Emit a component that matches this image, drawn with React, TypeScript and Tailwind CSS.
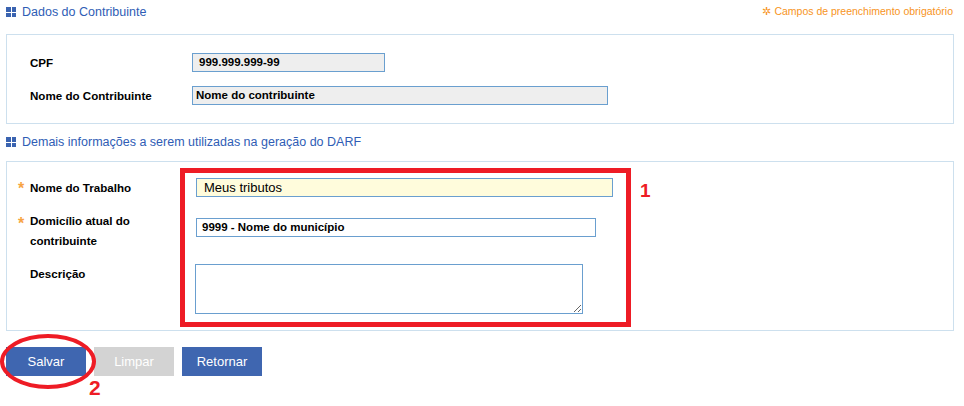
import React from "react";

const GridIcon = () => (
  <span className="grid grid-cols-2 gap-[1px] w-[10px] h-[10px] shrink-0">
    <span className="bg-[#3a63b0]" />
    <span className="bg-[#3a63b0]" />
    <span className="bg-[#3a63b0]" />
    <span className="bg-[#3a63b0]" />
  </span>
);

const Req = () => (
  <span className="block w-[12px] shrink-0 text-[16px] leading-none font-bold text-[#f7a443]">*</span>
);

export default function App() {
  return (
    <div
      className="relative w-[964px] h-[406px] bg-white overflow-hidden"
      style={{ fontFamily: '"Liberation Sans", Arial, sans-serif' }}
    >
      {/* Header 1 */}
      <div className="flex items-center justify-between pl-[6px] pr-[11px] pt-[4px] h-[20px]">
        <div className="flex items-center gap-[6px]">
          <GridIcon />
          <span className="text-[12.5px] text-[#2f5db5]">Dados do Contribuinte</span>
        </div>
        <span className="text-[10.5px] text-[#f7941d]">
          <span className="mr-[3px]">✲</span>Campos de preenchimento obrigatório
        </span>
      </div>

      {/* Panel 1 */}
      <div className="mx-[6px] mt-[14px] w-[948px] border border-[#cde0ee] pt-[18px] pb-[18px] pl-[23px] flex flex-col gap-[14px]">
        <div className="flex items-center">
          <span className="w-[162px] text-[11.6px] font-bold text-black">CPF</span>
          <div className="w-[193px] h-[19px] border border-[#6a9fcf] bg-[#eeeeee] flex items-center pl-[6px] text-[11.5px] font-bold text-black">
            999.999.999-99
          </div>
        </div>
        <div className="flex items-center">
          <span className="w-[162px] text-[11.6px] font-bold text-black">Nome do Contribuinte</span>
          <div className="w-[416px] h-[19px] border border-[#6a9fcf] bg-[#eeeeee] flex items-center pl-[3px] text-[11.5px] font-bold text-black">
            Nome do contribuinte
          </div>
        </div>
      </div>

      {/* Header 2 */}
      <div className="flex items-center gap-[6px] pl-[6px] mt-[10px] h-[16px]">
        <GridIcon />
        <span className="text-[12.5px] text-[#2f5db5]">
          Demais informações a serem utilizadas na geração do DARF
        </span>
      </div>

      {/* Panel 2 */}
      <div className="relative mx-[6px] mt-[11px] w-[948px] h-[170px] border border-[#cde0ee] pt-[16px] pl-[11px]">
        <div className="flex items-center">
          <div className="w-[178px] flex items-center">
            <span className="block mt-[2px]">
              <Req />
            </span>
            <span className="text-[11.6px] font-bold text-black">Nome do Trabalho</span>
          </div>
          <div className="w-[417px] h-[19px] border border-[#6a9fcf] bg-[#fffcdc] flex items-center pl-[7px] text-[13px] text-black">
            Meus tributos
          </div>
        </div>

        <div className="flex items-start mt-[13px]">
          <div className="w-[178px] flex items-start">
            <span className="block mt-[6px]">
              <Req />
            </span>
            <span className="text-[11.6px] font-bold text-black leading-[19.5px] pt-[1px]">
              Domicílio atual do
              <br />
              contribuinte
            </span>
          </div>
          <div className="mt-[8px] w-[400px] h-[19px] border border-[#6a9fcf] bg-white flex items-center pl-[5px] text-[11.5px] font-bold text-black">
            9999 - Nome do município
          </div>
        </div>

        <div className="flex items-start mt-[14px]">
          <div className="w-[177px] flex items-start">
            <span className="w-[12px] shrink-0" />
            <span className="text-[11.6px] font-bold text-black leading-[18px] pt-[1px]">Descrição</span>
          </div>
          <textarea
            className="w-[388px] h-[50px] border border-[#6a9fcf] bg-white outline-none"
            defaultValue=""
          />
        </div>

        {/* annotation 1 */}
        <div className="absolute left-[173px] top-[6px] w-[451px] h-[159px] border-[5px] border-[#ee1c25] pointer-events-none" />
        <span className="absolute left-[633px] top-[19px] text-[19px] font-bold text-[#ee1c25] leading-none">1</span>
      </div>

      {/* Buttons */}
      <div className="flex gap-[8px] pl-[6px] mt-[16px]">
        <button className="w-[80px] h-[29px] bg-[#3f66b0] text-white text-[13px]">Salvar</button>
        <button className="w-[80px] h-[29px] bg-[#d3d3d3] text-white text-[13px]">Limpar</button>
        <button className="w-[80px] h-[29px] bg-[#3f66b0] text-white text-[13px]">Retornar</button>
      </div>

      {/* annotation 2 */}
      <div className="absolute left-[0px] top-[334px] w-[96px] h-[55px] rounded-[50%] border-[4px] border-[#ee1c25] pointer-events-none" />
      <span className="absolute left-[89px] top-[377px] text-[21px] font-bold text-[#ee1c25] leading-none">2</span>
    </div>
  );
}
